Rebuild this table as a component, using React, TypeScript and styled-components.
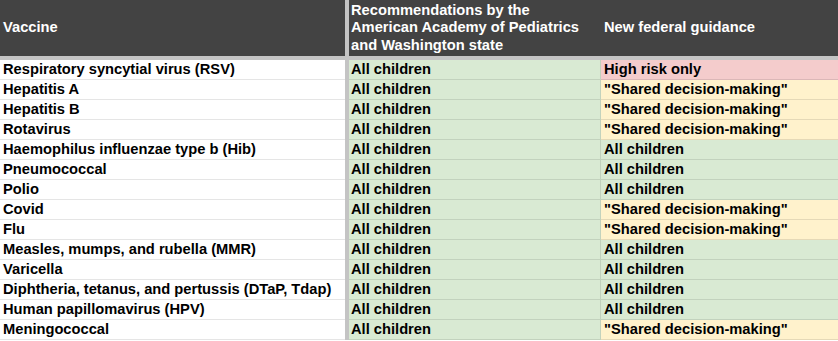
import React from "react";
import styled, { createGlobalStyle } from "styled-components";

const GlobalStyle = createGlobalStyle`
  html, body {
    margin: 0;
    padding: 0;
    background: #ffffff;
  }
  body {
    font-family: "Liberation Sans", Arial, sans-serif;
    font-size: 14.7px;
    font-weight: 700;
    color: #000000;
  }
`;

type Tone = "green" | "yellow" | "red" | "white";

const toneColor: Record<Tone, string> = {
  green: "#d9ead3",
  yellow: "#fff2cc",
  red: "#f4cccc",
  white: "#ffffff",
};

const Sheet = styled.div`
  width: 838px;
  height: 341px;
  overflow: hidden;
  display: flex;
  flex-direction: column;
  background: #ffffff;
`;

const cols = "345px 4px 252px 237px";

const HeaderRow = styled.div`
  display: grid;
  grid-template-columns: ${cols};
  height: 56px;
  background: #434343;
  color: #ffffff;
`;

const HeaderCell = styled.div<{ $pad?: number }>`
  display: flex;
  align-items: center;
  padding-left: ${(p) => p.$pad ?? 3}px;
  line-height: 17.5px;
`;

const VBar = styled.div`
  background: #c4c4c4;
`;

const HBar = styled.div`
  height: 4px;
  background: #c4c4c4;
`;

const Row = styled.div`
  display: grid;
  grid-template-columns: ${cols};
  height: 20px;
`;

const Cell = styled.div<{ $tone: Tone; $pad?: number; $rightLine?: boolean }>`
  background: ${(p) => toneColor[p.$tone]};
  border-bottom: 1px solid rgba(0, 0, 0, 0.1);
  border-right: ${(p) => (p.$rightLine ? "1px solid rgba(0, 0, 0, 0.1)" : "none")};
  padding-left: ${(p) => p.$pad ?? 3}px;
  line-height: 19px;
  white-space: nowrap;
  overflow: hidden;
`;

const ALL = "All children";
const SHARED = '"Shared decision-making"';

const rows: { name: string; fed: string; tone: Tone }[] = [
  { name: "Respiratory syncytial virus (RSV)", fed: "High risk only", tone: "red" },
  { name: "Hepatitis A", fed: SHARED, tone: "yellow" },
  { name: "Hepatitis B", fed: SHARED, tone: "yellow" },
  { name: "Rotavirus", fed: SHARED, tone: "yellow" },
  { name: "Haemophilus influenzae type b (Hib)", fed: ALL, tone: "green" },
  { name: "Pneumococcal", fed: ALL, tone: "green" },
  { name: "Polio", fed: ALL, tone: "green" },
  { name: "Covid", fed: SHARED, tone: "yellow" },
  { name: "Flu", fed: SHARED, tone: "yellow" },
  { name: "Measles, mumps, and rubella (MMR)", fed: ALL, tone: "green" },
  { name: "Varicella", fed: ALL, tone: "green" },
  { name: "Diphtheria, tetanus, and pertussis (DTaP, Tdap)", fed: ALL, tone: "green" },
  { name: "Human papillomavirus (HPV)", fed: ALL, tone: "green" },
  { name: "Meningococcal", fed: SHARED, tone: "yellow" },
];

export default function App() {
  return (
    <>
      <GlobalStyle />
      <Sheet>
        <HeaderRow>
          <HeaderCell>Vaccine</HeaderCell>
          <VBar />
          <HeaderCell $pad={2}>
            Recommendations by the
            <br />
            American Academy of Pediatrics
            <br />
            and Washington state
          </HeaderCell>
          <HeaderCell>New federal guidance</HeaderCell>
        </HeaderRow>
        <HBar />
        {rows.map((r) => (
          <Row key={r.name}>
            <Cell $tone="white">{r.name}</Cell>
            <VBar />
            <Cell $tone="green" $pad={2} $rightLine>
              {ALL}
            </Cell>
            <Cell $tone={r.tone}>{r.fed}</Cell>
          </Row>
        ))}
      </Sheet>
    </>
  );
}
